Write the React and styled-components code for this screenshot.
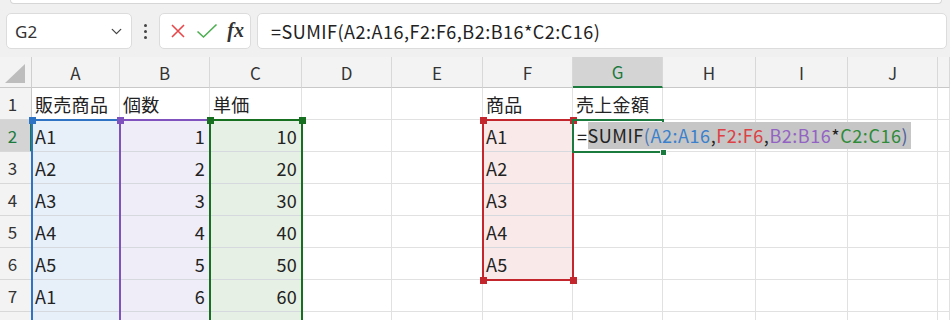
import React from 'react';
import styled, { createGlobalStyle } from 'styled-components';
import { ChevronDown } from 'lucide-react';

const GlobalStyle = createGlobalStyle`
  html, body { margin: 0; padding: 0; background: #ffffff; overflow: hidden; }
  #root { width: 950px; height: 320px; overflow: hidden; }
  * { box-sizing: border-box; }
`;

const COLS = [32, 88, 90, 92, 90, 91, 90, 90, 93, 92, 90];
const COL_X = COLS.reduce((acc, w, i) => { acc.push(i === 0 ? 0 : acc[i - 1] + COLS[i - 1]); return acc; }, []);
const HEADER_H = 31;
const ROW_H = 32;
const LETTERS = ['A', 'B', 'C', 'D', 'E', 'F', 'G', 'H', 'I', 'J'];

const CELL_FONT = `"Noto Sans CJK JP", "Noto Sans", sans-serif`;
const UI_FONT = `"Noto Sans", "Open Sans", sans-serif`;
const GREEN = '#1b7a3e';

const FILLS = {
  A: '#e7f0f9',
  B: '#efedf7',
  C: '#e7f0e4',
  F: '#f9e9e9',
};

const data = {
  1: { A: '販売商品', B: '個数', C: '単価', F: '商品', G: '売上金額' },
  2: { A: 'A1', B: 1, C: 10, F: 'A1' },
  3: { A: 'A2', B: 2, C: 20, F: 'A2' },
  4: { A: 'A3', B: 3, C: 30, F: 'A3' },
  5: { A: 'A4', B: 4, C: 40, F: 'A4' },
  6: { A: 'A5', B: 5, C: 50, F: 'A5' },
  7: { A: 'A1', B: 6, C: 60 },
  8: { A: 'A2', B: 7, C: 70 },
};

const ranges = [
  { col: 1, r1: 2, r2: 16, color: '#2f74c4' },
  { col: 2, r1: 2, r2: 16, color: '#8052bd' },
  { col: 3, r1: 2, r2: 16, color: '#16701f' },
  { col: 6, r1: 2, r2: 6, color: '#c4262e' },
];

/* ---------- toolbar ---------- */
const Page = styled.div`
  width: 950px;
  height: 320px;
  display: flex;
  flex-direction: column;
  background: #ffffff;
`;

const Toolbar = styled.div`
  height: 57px;
  background: #f0f0f0;
  display: flex;
  flex-direction: column;
  flex-shrink: 0;
`;

const RibbonEdge = styled.div`
  height: 4px;
  margin: 0 8px 0 10px;
  background: #ffffff;
  border: 1px solid #d6d6d6;
  border-top: none;
  border-radius: 0 0 6px 6px;
`;

const FormulaRow = styled.div`
  margin-top: 9px;
  height: 36px;
  display: flex;
  align-items: stretch;
  padding: 0 3px 0 6px;
`;

const Box = styled.div`
  background: #ffffff;
  border: 1px solid #dcdcdc;
  border-radius: 5px;
  display: flex;
  align-items: center;
`;

const NameBox = styled(Box)`
  width: 126px;
  padding: 0 6px 0 8px;
  justify-content: space-between;
  font-family: ${UI_FONT};
  font-size: 17px;
  color: #333;
`;

const Dots = styled.div`
  width: 27px;
  display: flex;
  flex-direction: column;
  align-items: center;
  justify-content: center;
  gap: 3px;
`;

const Dot = styled.span`
  width: 3px;
  height: 3px;
  border-radius: 50%;
  background: #444;
`;

const ButtonGroup = styled(Box)`
  width: 92px;
  padding: 0 6px 0 10px;
  justify-content: space-between;
`;

const Fx = styled.span`
  font-family: "Liberation Serif", "DejaVu Serif", serif;
  font-style: italic;
  font-weight: bold;
  font-size: 20px;
  color: #333;
  margin-top: -2px;
`;

const FormulaInput = styled(Box)`
  flex: 1;
  margin-left: 6px;
  padding-left: 13px;
  font-family: ${CELL_FONT};
  font-size: 18px;
  letter-spacing: 0.5px;
  color: #222;
`;

/* ---------- sheet ---------- */
const Sheet = styled.div`
  position: relative;
  flex: 1;
  display: grid;
  grid-template-columns: ${COLS.map((w) => `${w}px`).join(' ')} 1fr;
  grid-template-rows: ${HEADER_H}px repeat(8, ${ROW_H}px);
  overflow: hidden;
`;

const Corner = styled.div`
  background: #f3f3f3;
  border-right: 1px solid #cfcfcf;
  border-bottom: 1px solid #c8c8c8;
  display: flex;
  align-items: flex-end;
  justify-content: flex-end;
  padding: 0 6px 4px 0;
`;

const Triangle = styled.div`
  width: 20px;
  height: 19px;
  background: #bdbdbd;
  clip-path: polygon(100% 0, 100% 100%, 0 100%);
`;

const ColHeader = styled.div`
  background: ${(p) => (p.$active ? '#d4d4d4' : '#f3f3f3')};
  border-right: 1px solid #d8d8d8;
  border-bottom: ${(p) => (p.$active ? `2px solid ${GREEN}` : '1px solid #c8c8c8')};
  display: flex;
  align-items: center;
  justify-content: center;
  font-family: ${CELL_FONT};
  font-size: 17px;
  color: ${(p) => (p.$active ? GREEN : '#333')};
`;

const RowHeader = styled.div`
  background: ${(p) => (p.$active ? '#d4d4d4' : '#f3f3f3')};
  border-right: ${(p) => (p.$active ? `2px solid ${GREEN}` : '1px solid #c8c8c8')};
  border-bottom: 1px solid #d8d8d8;
  display: flex;
  align-items: center;
  justify-content: center;
  padding-right: ${(p) => (p.$active ? '5px' : '6px')};
  font-family: ${CELL_FONT};
  font-size: 17px;
  color: ${(p) => (p.$active ? GREEN : '#333')};
`;

const Cell = styled.div`
  background: ${(p) => p.$fill || '#ffffff'};
  border-right: 1px solid ${(p) => (p.$fill ? '#dadde2' : '#e1e1e1')};
  border-bottom: 1px solid ${(p) => (p.$fill ? '#d6d9de' : '#e1e1e1')};
  display: flex;
  align-items: center;
  justify-content: ${(p) => (p.$num ? 'flex-end' : 'flex-start')};
  padding: 0 4px 0 3px;
  font-family: ${CELL_FONT};
  font-size: 18px;
  letter-spacing: 0.3px;
  color: #222;
  white-space: nowrap;
  overflow: visible;
`;

const RangeBox = styled.div`
  position: absolute;
  left: ${(p) => p.$x}px;
  top: ${(p) => p.$y}px;
  width: ${(p) => p.$w}px;
  height: ${(p) => p.$h}px;
  border: 2px solid ${(p) => p.$color};
  pointer-events: none;
  z-index: ${(p) => p.$z};
`;

const Handle = styled.span`
  position: absolute;
  width: 7px;
  height: 7px;
  background: ${(p) => p.$color};
  ${(p) => (p.$top ? 'top: -4.5px;' : 'bottom: -4.5px;')}
  ${(p) => (p.$left ? 'left: -4.5px;' : 'right: -4.5px;')}
`;

const ActiveBox = styled.div`
  position: absolute;
  left: ${(p) => p.$x}px;
  top: ${(p) => p.$y}px;
  width: ${(p) => p.$w}px;
  height: ${(p) => p.$h}px;
  border: 2px solid ${GREEN};
  z-index: 8;
  pointer-events: none;
`;

const FillHandle = styled.span`
  position: absolute;
  right: -5px;
  bottom: -5px;
  width: 7px;
  height: 7px;
  background: ${GREEN};
  border: 1px solid #ffffff;
`;

const EditText = styled.div`
  position: relative;
  z-index: 9;
  display: flex;
  align-items: center;
  margin-left: 1px;
  white-space: nowrap;
  letter-spacing: 0.55px;
`;

const Selected = styled.span`
  background: #c6c6c6;
  line-height: 27px;
  padding-right: 3px;
`;

const Part = styled.span`
  color: ${(p) => p.$color || '#222'};
`;

const formulaParts = [
  { t: 'SUMIF' },
  { t: '(', c: '#4d78b8' },
  { t: 'A2:A16', c: '#3a80cc' },
  { t: ',' },
  { t: 'F2:F6', c: '#dd4045' },
  { t: ',' },
  { t: 'B2:B16', c: '#9363c4' },
  { t: '*' },
  { t: 'C2:C16', c: '#2f8a3a' },
  { t: ')', c: '#4d5f9a' },
];

function RangeOverlay({ col, r1, r2, color, z }) {
  const x = COL_X[col] - 1;
  const y = HEADER_H + (r1 - 1) * ROW_H - 1;
  const w = COLS[col] + 2;
  const h = (r2 - r1 + 1) * ROW_H + 2;
  return (
    <RangeBox $x={x} $y={y} $w={w} $h={h} $color={color} $z={z}>
      <Handle $color={color} $top $left />
      <Handle $color={color} $top />
      <Handle $color={color} $left />
      <Handle $color={color} />
    </RangeBox>
  );
}

export default function App() {
  const rows = [1, 2, 3, 4, 5, 6, 7, 8];
  return (
    <Page>
      <GlobalStyle />
      <Toolbar>
        <RibbonEdge />
        <FormulaRow>
          <NameBox>
            <span>G2</span>
            <ChevronDown size={17} color="#444" strokeWidth={1.8} />
          </NameBox>
          <Dots>
            <Dot />
            <Dot />
            <Dot />
          </Dots>
          <ButtonGroup>
            <svg width="16" height="16" viewBox="0 0 16 16">
              <path d="M2 2 L14 14 M14 2 L2 14" stroke="#e8474b" strokeWidth="1.6" fill="none" />
            </svg>
            <svg width="22" height="16" viewBox="0 0 22 16">
              <path d="M1.5 8.5 L7.5 14 L20.5 1.5" stroke="#4caf50" strokeWidth="1.6" fill="none" />
            </svg>
            <Fx>fx</Fx>
          </ButtonGroup>
          <FormulaInput>=SUMIF(A2:A16,F2:F6,B2:B16*C2:C16)</FormulaInput>
        </FormulaRow>
      </Toolbar>
      <Sheet>
        <Corner>
          <Triangle />
        </Corner>
        {LETTERS.map((l) => (
          <ColHeader key={l} $active={l === 'G'}>{l}</ColHeader>
        ))}
        <ColHeader />
        {rows.map((r) => (
          <React.Fragment key={r}>
            <RowHeader $active={r === 2}>{r}</RowHeader>
            {LETTERS.map((l) => {
              const v = data[r] && data[r][l];
              const fill = r >= 2 && FILLS[l] && (l !== 'F' || r <= 6) ? FILLS[l] : null;
              if (r === 2 && l === 'G') {
                return (
                  <Cell key={l}>
                    <EditText>
                      <Part>=</Part>
                      <Selected>
                        {formulaParts.map((p, i) => (
                          <Part key={i} $color={p.c}>{p.t}</Part>
                        ))}
                      </Selected>
                    </EditText>
                  </Cell>
                );
              }
              return (
                <Cell key={l} $fill={fill} $num={typeof v === 'number'}>
                  {v}
                </Cell>
              );
            })}
            <Cell />
          </React.Fragment>
        ))}
        {ranges.map((rg, i) => (
          <RangeOverlay key={i} {...rg} z={3 + i} />
        ))}
        <ActiveBox
          $x={COL_X[7] - 1}
          $y={HEADER_H + ROW_H - 1}
          $w={COLS[7] + 2}
          $h={ROW_H + 2}
        >
          <FillHandle />
        </ActiveBox>
      </Sheet>
    </Page>
  );
}
